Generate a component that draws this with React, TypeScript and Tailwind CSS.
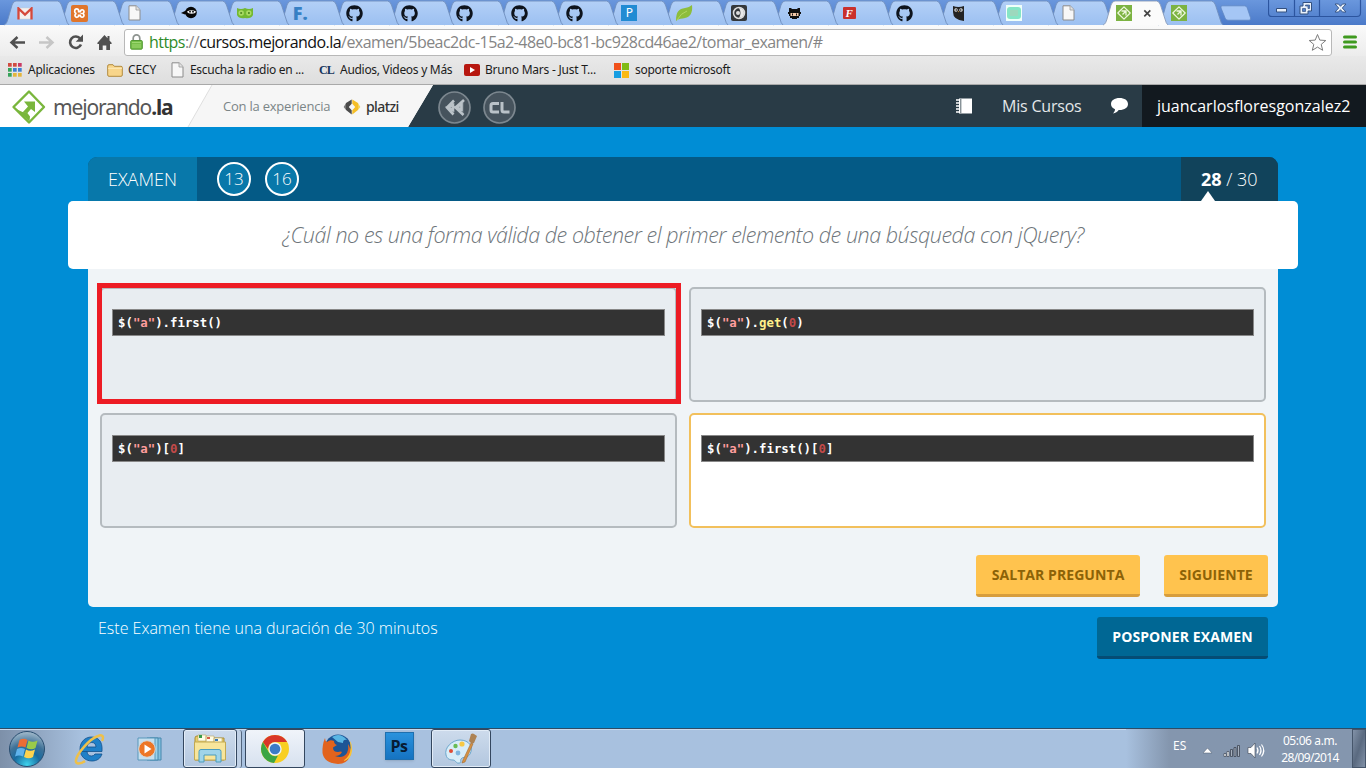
import React from "react";
import { FaGithub } from "react-icons/fa";

const page = (
  <svg width="13" height="16" viewBox="0 0 13 16">
    <path d="M1 .8h7.2L12 4.6V15H1z" fill="#f7f7f7" stroke="#8b8b8b" />
    <path d="M8 1v4h4" fill="#e3e3e3" stroke="#9a9a9a" strokeWidth=".8" />
  </svg>
);

const mejorandoIcon = (
  <svg width="16" height="16" viewBox="0 0 16 16">
    <path d="M0 0h16v16H0z" fill="#7cb342" />
    <path d="M8 1.8 14.2 8 8 14.2 1.8 8z" fill="none" stroke="#f0f8e0" strokeWidth="1.2" strokeLinejoin="round" />
    <path d="M5.500 6h4.500v4.500M10 6l-3.500 3.500" fill="none" stroke="#f0f8e0" strokeWidth="1.300" />
  </svg>
);

const github = <FaGithub size={17} color="#0d131c" />;

const tabIcons: React.ReactNode[] = [
  <svg width="16" height="13" viewBox="0 0 16 13">
    <path d="M1 1h14v11H1z" fill="#f4efef" stroke="#ccc" strokeWidth=".5" />
    <path d="M1.5 12.5V1.5L8 7.6l6.500-6.100v11" fill="none" stroke="#d5483b" strokeWidth="2.300" />
  </svg>,
  <svg width="17" height="17" viewBox="0 0 17 17">
    <rect width="17" height="17" rx="2" fill="#e0752b" />
    <path d="M3.800 5.800a1.900 1.900 0 0 1 3.800 0v.8h1.800v-.8a1.900 1.900 0 1 1 2.200 2.700 1.900 1.900 0 1 1-2.200 2.700v-.8H7.600v.8a1.900 1.900 0 1 1-2-2.700 2 2 0 0 1-1.800-2.700z" fill="none" stroke="#fff" strokeWidth="1.700" />
  </svg>,
  page,
  <svg width="17" height="14" viewBox="0 0 17 14">
    <path d="M0 7l5-2.500 1 3-2 1z" fill="#060606" />
    <circle cx="10" cy="6.500" r="5.800" fill="#060606" />
    <path d="M6 5.500c3-1.600 6-1.600 9 0-.3 3-8.300 3-9 0z" fill="#f5f5f5" />
    <circle cx="9" cy="5.700" r=".9" /><circle cx="12" cy="5.700" r=".9" />
  </svg>,
  <svg width="16" height="11" viewBox="0 0 16 11">
    <path d="M0 0q4 2 8 0 4 2 8 0v7q-2 4-8 3-6 1-8-3z" fill="#73b832" />
    <circle cx="4.200" cy="5" r="2.700" fill="#a9db63" /><circle cx="11.800" cy="5" r="2.700" fill="#a9db63" />
    <path d="M3.300 5h1.800M11 5h1.800" stroke="#3f7714" strokeWidth="1.300" />
  </svg>,
  <span className="pl-[1px] font-['Open_Sans'] text-[18px] leading-4 font-extrabold text-[#3680c4]">F.</span>,
  github, github, github, github, github,
  <span className="flex size-4 items-center justify-center bg-[#218bd3] text-[12px] leading-none text-white">P</span>,
  <svg width="18" height="17" viewBox="0 0 18 17">
    <path d="M1 16C1 6 4 4 10 3c3-.5 5-1.500 7-3 1 8-2 12-7 13-3 .8-6 .5-9 3z" fill="#8dbd3c" />
    <path d="M2 15Q6 8 12 6" fill="none" stroke="#b5d96a" strokeWidth=".9" />
  </svg>,
  <svg width="16" height="16" viewBox="0 0 16 16">
    <rect width="16" height="16" rx="2" fill="#34383b" />
    <circle cx="8" cy="8" r="5.500" fill="none" stroke="#ddd" strokeWidth="1.500" />
    <path d="M8 3a5 5 0 0 1 0 10c2-3 2-7 0-10z" fill="#e8e8e8" /><circle cx="7" cy="8" r="2" fill="#ddd" />
  </svg>,
  <svg width="13" height="11" viewBox="0 0 13 11">
    <path d="M1 0h2l1 1h5l1-1h2v4h1v2h-1v2h-1v2H9v1H4v-1H2V8H1V6H0V4h1z" fill="#111" />
    <path d="M2.500 5h8v3h-8z" fill="#f2c9a8" /><path d="M4 5.500h1v2H4zM8 5.500h1v2H8z" fill="#111" />
  </svg>,
  <span className="flex h-3 w-[13px] items-center justify-center rounded-[1px] bg-[#c9302c] font-['Liberation_Serif'] text-[11px] leading-none font-bold text-white italic">F</span>,
  github,
  <svg width="11" height="15" viewBox="0 0 11 15">
    <path d="M0 0q5.500 2 11 0v15Q0 14 0 6z" fill="#232323" />
    <circle cx="3" cy="4" r="1.700" fill="#eee" /><circle cx="8" cy="4" r="1.700" fill="#eee" />
    <circle cx="3.200" cy="4" r=".8" /><circle cx="7.800" cy="4" r=".8" /><path d="m5 5 .5 1.500L6 5z" fill="#e8a23a" />
  </svg>,
  <svg width="16" height="16" viewBox="0 0 16 16">
    <path d="M0 0h16v16H0z" fill="#f0fffa" /><rect x="1" y="2" width="14" height="12" rx="3" fill="#85e5c6" />
    <path d="M4 5h8v6H4z" fill="#9dd8bd" />
  </svg>,
  page,
  mejorandoIcon,
  mejorandoIcon,
];

const tabZ = ["z-[22]", "z-[21]", "z-20", "z-[19]", "z-[18]", "z-[17]", "z-[16]", "z-[15]", "z-[14]", "z-[13]", "z-[12]", "z-[11]", "z-10", "z-[9]", "z-[8]", "z-[7]", "z-[6]", "z-[5]", "z-[4]", "z-[3]", "z-30", "z-[1]"];

function Tab({ icon, i }: { icon: React.ReactNode; i: number }) {
  const active = i === 20;
  return (
    <div className={`relative h-[25px] w-[54.95px] shrink-0 ${tabZ[i]}`}>
      <svg className="absolute top-0 left-0 overflow-visible" width="64" height="25" viewBox="0 0 64 25">
        <path
          d="M0 25C2.500 24 3 22 4 19L8 5Q9.300 1 12 1h41.500Q56 1 57.500 5l4.500 14q1 4.500 3 6"
          fill={active ? "#fbfbfb" : "url(#tabfill)"}
          stroke={active ? "#8a9cb9" : "#6f8fbd"}
          strokeWidth=".9"
        />
      </svg>
      <div className="relative flex h-[25px] w-[42px] items-center justify-center pt-px">{icon}</div>
      {active && (
        <svg className="absolute top-[9px] left-[40px]" width="9" height="9" viewBox="0 0 9 9">
          <path d="m1.300 1.300 6 6m0-6-6 6" stroke="#444" strokeWidth="1.700" />
        </svg>
      )}
    </div>
  );
}

function TabStrip() {
  return (
    <div className="flex h-[25px] shrink-0 bg-linear-to-b from-[#6a97dd] to-[#4b7ac9] pl-1">
      <svg className="absolute" width="0" height="0">
        <defs>
          <linearGradient id="tabfill" x1="0" x2="0" y1="0" y2="1">
            <stop offset="0" stopColor="#b3d0f7" /><stop offset="1" stopColor="#9cc0f1" />
          </linearGradient>
        </defs>
      </svg>
      {tabIcons.map((icon, i) => <Tab key={i} icon={icon} i={i} />)}
      <svg className="mt-[5px] ml-[7px] shrink-0" width="32" height="16" viewBox="0 0 32 16">
        <path d="M2 .8h22.500q2 0 2.700 2l3.300 10q.7 2.400-1.500 2.400H8q-2 0-2.800-2L1 3Q.5.800 2 .8z" fill="#a5c6f5" stroke="#5f86c2" strokeWidth=".8" />
      </svg>
      <svg className="mr-1 ml-auto shrink-0" width="94" height="18" viewBox="0 0 94 18">
        <path d="M.5-1v14q0 3.500 3.500 3.500h85q3.500 0 3.500-3.500V-1M26.500 0v16M51.500 0v16" fill="none" stroke="#2c559f" strokeWidth="1.200" />
        <path d="M8.500 8.500h10v3.500h-10z" fill="#e9f1fb" stroke="#33507f" />
        <path d="M35 2.500h8.500v8.500H40v3h-8V6h3z" fill="#e9f1fb" stroke="#33507f" />
        <path d="M37.500 5h4v3.500H40V6h-2.500zM34.500 8.500h3v3h-3z" fill="#5180cc" stroke="#33507f" strokeWidth=".7" />
        <path d="M67 4h3.500l2 2.300L74.500 4H78l-3.700 4L78 12h-3.500l-2-2.300-2 2.300H67l3.700-4z" fill="#e9f1fb" stroke="#33507f" strokeWidth=".9" />
      </svg>
    </div>
  );
}

function Toolbar() {
  return (
    <div className="flex h-[31px] shrink-0 items-center bg-linear-to-b from-[#fafafa] to-[#ececec]">
      <svg className="shrink-0" width="124" height="31" viewBox="0 0 124 31">
        <path d="M25 17.500H12M17.500 12l-6 5.500 6 5.500" fill="none" stroke="#505050" strokeWidth="2.500" />
        <path d="M39 17.500h13M46.500 12l6 5.500-6 5.500" fill="none" stroke="#c6c6c6" strokeWidth="2.500" />
        <path d="M80.300 13.800A5.700 5.700 0 1 0 81 19.500" fill="none" stroke="#505050" strokeWidth="2.600" />
        <path d="M83 9.500v7.300h-7.300z" fill="#505050" />
        <path d="M97 18.200 104.500 10l3 3.300V11h2v4.500l2.500 2.700-1 .8h-1v6h-3.700v-4.500h-3.600V25H99v-6h-1z" fill="#505050" />
      </svg>
      <div className="mt-[3px] flex h-[27px] w-[1208px] shrink-0 items-center rounded-[3px] border border-[#b8b8b8] bg-white pl-[5px]">
        <svg width="13" height="16" viewBox="0 0 13 16">
          <path d="M3.200 7V4.200a3.300 3.300 0 0 1 6.600 0V7" fill="none" stroke="#8e9490" strokeWidth="1.700" />
          <rect x=".7" y="6.500" width="11.600" height="8.700" rx="1" fill="#77bf49" stroke="#519833" />
          <path d="M2 8.500h9M2 11h9M2 13h9" stroke="#a6de7b" strokeWidth=".8" />
        </svg>
        <span className="ml-[6px] font-['Open_Sans'] text-[16px] leading-5 tracking-[-0.55px] whitespace-nowrap text-[#858585]">
          <span className="text-[#2e8b28]">https</span>://<span className="text-[#111]">cursos.mejorando.la</span>/examen/5beac2dc-15a2-48e0-bc81-bc928cd46ae2/tomar_examen/#
        </span>
        <svg className="mr-[4px] ml-auto shrink-0" width="19" height="19" viewBox="0 0 19 19">
          <path d="m9.500 1.500 2.300 5.600 6 .4-4.600 3.900 1.500 5.900-5.200-3.200-5.200 3.200 1.500-5.900L1.200 7.500l6-.4z" fill="#fff" stroke="#7e7e7e" strokeLinejoin="round" />
        </svg>
      </div>
      <svg className="mt-[3px] ml-[11px] shrink-0" width="14" height="14" viewBox="0 0 14 14">
        <path d="M1.500 2h11M1.500 7h11M1.500 12h11" stroke="#3f9a1f" strokeWidth="3" strokeLinecap="round" />
      </svg>
    </div>
  );
}

const bookmarkText = "font-['Noto_Sans'] text-[12px] leading-4 whitespace-nowrap text-[#1c1c1c]";

function Bookmarks() {
  const c = ["#d04b40", "#d04b40", "#c93a64", "#37a35a", "#3c7fd0", "#3c7fd0", "#37a35a", "#e4b63c", "#e4b63c"];
  return (
    <div className="flex h-[29px] shrink-0 items-center border-b border-[#a9a9a9] bg-linear-to-b from-[#e9e9e9] to-[#dedede] pl-2">
      <svg className="shrink-0" width="14" height="14" viewBox="0 0 14 14">
        {c.map((f, i) => <rect key={i} x={(i % 3) * 5} y={Math.floor(i / 3) * 5} width="3.700" height="3.700" fill={f} />)}
      </svg>
      <span className={`ml-[6px] w-[79px] tracking-[-0.25px] ${bookmarkText}`}>Aplicaciones</span>
      <svg className="shrink-0" width="16" height="13" viewBox="0 0 16 13">
        <path d="M.7 2q0-1.300 1.300-1.300h4L7.300 2.300H14q1.300 0 1.300 1.200V11q0 1.300-1.300 1.300H2Q.7 12.300.7 11z" fill="#f8d58a" stroke="#b28a3e" />
        <path d="M1 4.300h14" stroke="#fdeab9" />
      </svg>
      <span className={`ml-[5px] w-[43px] tracking-[-0.1px] ${bookmarkText}`}>CECY</span>
      {page}
      <span className={`ml-[6px] w-[128px] tracking-[-0.3px] ${bookmarkText}`}>Escucha la radio en ...</span>
      <span className="w-[22px] pl-px font-['Liberation_Serif'] text-[12px] leading-4 font-bold tracking-[-0.8px] text-[#17365d]">CL</span>
      <span className={`w-[124px] tracking-[-0.29px] ${bookmarkText}`}>Audios, Videos y Más</span>
      <svg className="shrink-0" width="16" height="12" viewBox="0 0 16 12">
        <rect width="16" height="12" rx="2" fill="#b7170f" /><path d="m6 3 5 3-5 3z" fill="#fff" />
      </svg>
      <span className={`ml-[5px] w-[129px] tracking-[-0.22px] ${bookmarkText}`}>Bruno Mars - Just T...</span>
      <svg className="shrink-0" width="15" height="15" viewBox="0 0 15 15">
        <path d="M0 0h7v7H0z" fill="#f1511b" /><path d="M8 0h7v7H8z" fill="#80bb16" /><path d="M0 8h7v7H0z" fill="#169de2" /><path d="M8 8h7v7H8z" fill="#fbb914" />
      </svg>
      <span className={`ml-[6px] tracking-[-0.3px] ${bookmarkText}`}>soporte microsoft</span>
    </div>
  );
}

function SiteHeader() {
  return (
    <div className="relative flex h-[42px] shrink-0 items-center bg-[#293b46] font-['Open_Sans']">
      <svg className="absolute top-0 left-0" width="440" height="42" viewBox="0 0 440 42">
        <path d="M0 0h433l-25 42H0z" fill="#fff" />
        <path d="M212 0h221l-25 42H188z" fill="#f6f6f6" />
        <path d="m212 0-24 42" stroke="#dedede" />
      </svg>
      <div className="relative flex h-[42px] w-[436px] shrink-0 items-center pt-px">
        <svg className="ml-[11px] shrink-0" width="36" height="36" viewBox="0 0 36 36">
          <path d="M18 2.500 33 18 18 33.500 2.500 18z" fill="none" stroke="#79b63c" strokeWidth="2.400" strokeLinejoin="round" />
          <path d="M13 12.500h11V23l-4-3-3.500 4-5-.5 5.500-6z" fill="#79b63c" />
          <path d="M4 19.500 11.500 23l4.500.500 3 4-.5 5z" fill="#79b63c" />
        </svg>
        <span className="ml-[6px] w-[170px] font-['Noto_Sans'] text-[21px] leading-6 tracking-[-1.12px] text-[#575757]">
          mejorando<b className="text-[#333]">.la</b>
        </span>
        <span className="w-[120px] text-[13px] tracking-[-0.22px] whitespace-nowrap text-[#7b8587]">Con la experiencia</span>
        <svg className="shrink-0" width="18" height="18" viewBox="0 0 18 18">
          <path d="M8.700 1.500 3 5v7l5.700 4.500v-4.300L5.800 9l2.900-3.200z" fill="#4b4b4b" /><path d="M3 5v7L.7 9z" fill="#777" />
          <path d="M9.300 1.500 15 5v7l-5.700 4.500v-4.300L12.200 9 9.300 5.800z" fill="#f5be27" /><path d="M15 5v7l2.300-3z" fill="#f2d25b" />
        </svg>
        <span className="ml-[5px] font-['Noto_Sans'] text-[14px] font-medium tracking-[-0.6px] text-[#333]">platzi</span>
      </div>
      <svg className="shrink-0" width="84" height="42" viewBox="0 0 84 42">
        <g fill="#46535d" stroke="#7c878f" strokeWidth="1.700"><circle cx="18.500" cy="22.500" r="15.500" /><circle cx="63.500" cy="22.500" r="15.500" /></g>
        <path d="M18 15.500 11 22.500l6.500 7M28 15l-8.500 7.500 8 7.500M12 22l5-2v5zM20 22l5.500-2.500v5z" fill="#bac2c8" fillOpacity=".25" stroke="#bac2c8" strokeWidth="2.600" />
        <path d="M63 18.500h-6q-2 0-2 2v4.500q0 2 2 2h6M66 17v8q0 2 2 2h5.500" fill="none" stroke="#bac2c8" strokeWidth="3" />
      </svg>
      <div className="ml-auto flex h-[42px] items-center">
        <svg width="18" height="16" viewBox="0 0 18 16">
          <path d="M4 .5h13v15H4z" fill="#fff" /><path d="M1 2h5M1 5h5M1 8h5M1 11h5M1 14h5" stroke="#fff" strokeWidth="1.300" /><path d="M5.800 1v14" stroke="#293b46" strokeWidth=".8" />
        </svg>
        <span className="ml-[29px] w-[108px] text-[16px] tracking-[-0.2px] whitespace-nowrap text-[#e4e8ea]">Mis Cursos</span>
        <svg width="19" height="18" viewBox="0 0 19 18">
          <path d="M9.500 1C4.500 1 1 3.500 1 7c0 2.500 1.600 4.300 4 5.200 0 1.600-.8 3-2 4.300 2.500-.5 4.500-1.700 5.700-3.500C14.500 13.200 18 10.700 18 7s-3.500-6-8.500-6z" fill="#fff" />
        </svg>
        <div className="ml-[13px] flex h-[42px] w-[224px] items-center bg-[#12191f] pl-[15px] text-[16px] whitespace-nowrap text-white">juancarlosfloresgonzalez2</div>
      </div>
    </div>
  );
}

const Str = () => <span className="text-[#ff9d9d]">"a"</span>;
const Zero = () => <span className="text-[#c34a4a]">0</span>;

function Answer({ children, selected, marked }: { children: React.ReactNode; selected?: boolean; marked?: boolean }) {
  return (
    <div className={`relative h-[115px] rounded-[5px] border-2 px-[10px] pt-[20px] ${selected ? "border-[#f2c05c] bg-white" : "border-[#b5bbbf] bg-[#e8edf1]"}`}>
      <div className="flex h-[27px] items-center border border-[#888] bg-[#333] pt-px pl-[5px] font-['DejaVu_Sans_Mono'] text-[12.35px] font-bold whitespace-pre text-white">{children}</div>
      {marked && <div className="absolute -top-[6px] -right-[6px] -bottom-[4px] -left-[5px] border-[5px] border-[#ed1c24]" />}
    </div>
  );
}

function Exam() {
  return (
    <div className="flex min-h-0 flex-1 flex-col bg-[#008dd5] pt-[30px] font-['Open_Sans']">
      <div className="mx-[88px] flex h-[44px] shrink-0 items-center overflow-hidden rounded-t-[9px] bg-[#045a86]">
        <div className="flex h-full w-[109px] items-center bg-[#0878aa] pl-5 text-[18px] font-light text-white">EXAMEN</div>
        <div className="ml-5 flex gap-[14px]">
          {["13", "16"].map((n) => (
            <div key={n} className="flex size-[34px] items-center justify-center rounded-full border-2 border-white bg-[#0878aa] text-[17px] font-light text-white">{n}</div>
          ))}
        </div>
        <div className="relative ml-auto flex h-full w-[97px] items-center bg-[#11435b] pl-5 text-[18px] font-light whitespace-pre text-white">
          <b className="font-bold">28</b> / 30
          <svg className="absolute bottom-0 left-[19px]" width="16" height="10" viewBox="0 0 16 10"><path d="m8 0 7 10H1z" fill="#fff" /></svg>
        </div>
      </div>
      <div className="mx-[68px] flex h-[68px] shrink-0 items-center justify-center rounded-[5px] bg-white text-[21.5px] font-light text-[#6e757a] italic">
        <span className="tracking-[-0.46px] whitespace-nowrap">¿Cuál no es una forma válida de obtener el primer elemento de una búsqueda con jQuery?</span>
      </div>
      <div className="mx-[88px] flex h-[338px] shrink-0 flex-col rounded-b-[5px] bg-[#f0f4f7] px-3 pt-[18px]">
        <div className="grid w-[1166px] grid-cols-2 gap-x-3 gap-y-[11px]">
          <Answer marked>$(<Str />).first()</Answer>
          <Answer>$(<Str />).<span className="text-[#fff08a]">get</span>(<Zero />)</Answer>
          <Answer>$(<Str />)[<Zero />]</Answer>
          <Answer selected>$(<Str />).first()[<Zero />]</Answer>
        </div>
        <div className="mt-[27px] -mr-[2px] flex justify-end gap-6 text-[14px] font-bold tracking-[0.07px] text-[#8c6207]">
          <div className="flex h-[42px] w-[164px] items-center justify-center rounded-[3px] border-b-[3px] border-[#d79d3d] bg-[#ffc34e]">SALTAR PREGUNTA</div>
          <div className="flex h-[42px] w-[104px] items-center justify-center rounded-[3px] border-b-[3px] border-[#d79d3d] bg-[#ffc34e]">SIGUIENTE</div>
        </div>
      </div>
      <div className="flex items-start justify-between pt-[10px] pr-[98px] pl-[98px] text-white">
        <span className="text-[16px] leading-[22px] font-light whitespace-nowrap">Este Examen tiene una duración de 30 minutos</span>
        <div className="flex h-[42px] w-[171px] items-center justify-center rounded-[3px] border-b-[3px] border-[#054c74] bg-[#006794] text-[14px] font-bold tracking-[0.1px]">POSPONER EXAMEN</div>
      </div>
    </div>
  );
}

const slot = "flex h-[39px] shrink-0 items-center justify-center";
const openSlot = "rounded-[3px] border border-[#34475f] bg-linear-to-b from-[#cddbec] to-[#b3c7df] shadow-[inset_0_0_0_1px_#e2ecf7]";

function Taskbar() {
  return (
    <div className="flex h-10 shrink-0 items-center border-t border-[#2d4c66] bg-linear-to-r from-[#7d90a9] via-[#a8c1df] via-[6%] to-[#a8c1df] shadow-[inset_0_1px_0_#c8daee]">
      <div className={`${slot} w-[54px]`}>
        <svg width="38" height="38" viewBox="0 0 38 38">
          <defs><radialGradient id="orb" cx=".5" cy=".95" r=".95"><stop offset="0" stopColor="#3ed3ed" /><stop offset=".4" stopColor="#176ba0" /><stop offset=".65" stopColor="#3f7298" /><stop offset="1" stopColor="#a5bccd" /></radialGradient></defs>
          <circle cx="19" cy="19" r="17.500" fill="url(#orb)" stroke="#284d70" />
          <path d="M11.500 10q4-2.500 8 0l-2 7.500q-4-2-8 0z" fill="#ec6d35" /><path d="M20.500 10.500q4 2.500 9 0l-2 7.500q-4 2.500-9 0z" fill="#9aca4a" />
          <path d="M9 19q4-2 8 0l-2 7.500q-4-2-8 0z" fill="#5fb3ec" /><path d="M18 19.500q4 2.500 9 0L25 27q-4 2.500-9 0z" fill="#fcd34f" />
        </svg>
      </div>
      <div className={`${slot} w-[71px]`}>
        <svg width="34" height="34" viewBox="0 0 34 34">
          <path d="M8 19.500h21C30 8 24 5 18.500 5 12 5 7 10 7 17s5 12 12 12c5 0 8.500-2.500 10-7h-7q-1.200 2-3.500 2-4 0-4.500-4.500M14 15q.7-4.500 4.700-4.500T23 15z" fill="#1f80c8" stroke="#12518c" strokeWidth=".8" />
          <path d="M29 9c2-4 1-7-4-5C16 7 4 22 3 28c-1 5 5 4 9 1" fill="none" stroke="#eec04a" strokeWidth="2.500" />
        </svg>
      </div>
      <div className={`${slot} w-[51px]`}>
        <svg width="30" height="28" viewBox="0 0 30 28">
          <path d="M14 3h11v22H14z" fill="#83c0df" stroke="#4688ad" /><path d="M11 3h11v22H11z" fill="#9bd2ea" stroke="#4688ad" /><path d="M2 3h17v22H2z" fill="#c5dfef" stroke="#5897ba" />
          <circle cx="11" cy="14" r="8.300" fill="#ed7626" stroke="#d7d7d7" /><path d="m8.500 9.500 7 4.500-7 4.500z" fill="#fff" />
        </svg>
      </div>
      <div className={`${slot} ${openSlot} ml-[7px] w-[54px]`}>
        <svg width="34" height="31" viewBox="0 0 34 31">
          <path d="M2 5q0-2 2-2h8l2 2h17v22H2z" fill="#e9cd69" stroke="#a98c39" />
          <path d="M5 2h8v6H5zM13 3h8v6h-8zM21 5h8v6h-8z" fill="#fffde7" stroke="#b9a45f" strokeWidth=".6" />
          <path d="M6 2h3v3H6z" fill="#379c4b" /><path d="M14 4h3v2h-3z" fill="#d85c4a" /><path d="M22 6h3v2h-3z" fill="#3779b7" />
          <path d="M1.500 9h31v18h-31z" fill="#f7e59b" stroke="#c2a952" /><path d="M6 29V18.500q0-2 2-2h18q2 0 2 2V29h-5v-7H11v7z" fill="#9fd4ea" stroke="#4b9dbd" />
        </svg>
      </div>
      <div className="h-[38px] w-[5px] rounded-r-[3px] border-r border-[#52657e] bg-[#bfd0e5]" />
      <div className={`${slot} ml-[3px] w-[60px] rounded-[3px] border border-[#34475f] bg-linear-to-b from-[#f0f4fa] to-[#d7e1ef]`}>
        <svg width="30" height="30" viewBox="0 0 30 30">
          <circle cx="15" cy="15" r="14" fill="#f8cf22" />
          <path d="M15 1a14 14 0 0 1 12.100 7H15a7 7 0 0 0-7 7L2.900 8A14 14 0 0 1 15 1z" fill="#d93628" />
          <path d="M2.900 8 9 18.500a7 7 0 0 0 9 3L14 29A14 14 0 0 1 2.900 8z" fill="#3ca545" />
          <circle cx="15" cy="15" r="6.700" fill="#eef4fa" /><circle cx="15" cy="15" r="5.300" fill="#3c7bc7" />
        </svg>
      </div>
      <div className={`${slot} w-[64px]`}>
        <svg width="32" height="32" viewBox="0 0 32 32">
          <circle cx="17" cy="14.500" r="13" fill="#1d5596" /><path d="M11 4q8-5 15 3-4-1-4 3l-5-1z" fill="#59b6e4" />
          <path d="M4 5q0 3 2 4 3-3 7-1 0 3 3 4l-4 2.500q0 4.500 5 4.500 3-1 4 0-2 4-7 4 8 3 12-3 2-4 1-9 4 6 2 12-3 8-12 8Q3 30 1.500 20 1 12 4 5z" fill="#e2631d" />
          <path d="M28.500 7q4 15-6.500 21 8-1 9-10 .5-7-2.500-11z" fill="#fac336" />
        </svg>
      </div>
      <div className={`${slot} w-[60px] pb-[5px]`}>
        <div className="flex h-[28px] w-[29px] items-center justify-center border border-[#1f6fae] bg-linear-to-b from-[#2a92dd] to-[#1573c1] font-['Open_Sans'] text-[16px] font-bold tracking-[-0.5px] text-[#071c33] shadow-sm">Ps</div>
      </div>
      <div className={`${slot} ${openSlot} ml-[2px] w-[60px]`}>
        <svg width="34" height="34" viewBox="0 0 34 34">
          <path d="M2 23c-2-7 6-15 14-15 9 0 14 7 10 14-3 5-7 2-9 5-1 2 1 4-2 4-3 1-3-3-6-3s-6-1-7-5z" fill="#d8edf8" stroke="#6ca6cc" />
          <circle cx="7" cy="19" r="2" fill="#df4b34" /><circle cx="11.500" cy="14" r="2.200" fill="#68bc55" /><circle cx="18" cy="12" r="2.600" fill="#f7c843" /><circle cx="14" cy="21" r="2.400" fill="#7fb6df" />
          <path d="m27 11 2 1-8 18-3 1 1-3z" fill="#d59143" stroke="#9a6124" strokeWidth=".5" /><path d="m25 9 2-7q2-1 3 0l3 2-3 7-2 1z" fill="#ad8253" />
        </svg>
      </div>
      <div className="ml-auto flex h-full w-[240px] items-center bg-linear-to-r from-[#a8c1df] to-[#8496ae] to-[18%] font-['Noto_Sans'] text-white">
        <span className="mb-[6px] ml-[47px] w-[29px] text-[12px]">ES</span>
        <svg className="mt-1 shrink-0" width="66" height="18" viewBox="0 0 66 18">
          <path d="m1 11 4.500-5 4.500 5z" fill="#fff" stroke="#4e5c70" strokeWidth=".5" />
          <path d="M22 11.500h2v3h-2zM25 9.500h2v5h-2z" fill="#fff" stroke="#3d4552" strokeWidth=".7" />
          <path d="M28.500 7.500h2v7h-2zM32 5.500h2v9h-2zM35.500 3.500h2v11h-2z" fill="#a5afbd" stroke="#3d4552" strokeWidth=".8" />
          <path d="M46 5.500h3L53 1v15l-4-4.500h-3z" fill="#fff" stroke="#3d4552" strokeWidth=".6" />
          <path d="M55 5.500q2 3 0 6M57.500 4q3 4.500 0 9M59.500 2.500q4.500 6 0 12" fill="none" stroke="#fff" strokeWidth="1.200" />
        </svg>
        <div className="ml-[11px] flex w-[62px] flex-col items-center text-[12px] leading-[17px] tracking-[-0.65px] whitespace-nowrap">
          <span className="tracking-[-0.4px]">05:06 a.m.</span><span>28/09/2014</span>
        </div>
        <div className="ml-auto h-full w-[14px] border border-[#46566b] bg-linear-to-br from-[#8292a8] via-[#5a6a80] to-[#8292a8]" />
      </div>
    </div>
  );
}

export default function App() {
  return (
    <div className="flex h-[768px] w-[1366px] flex-col overflow-hidden">
      <TabStrip />
      <Toolbar />
      <Bookmarks />
      <SiteHeader />
      <Exam />
      <Taskbar />
    </div>
  );
}
